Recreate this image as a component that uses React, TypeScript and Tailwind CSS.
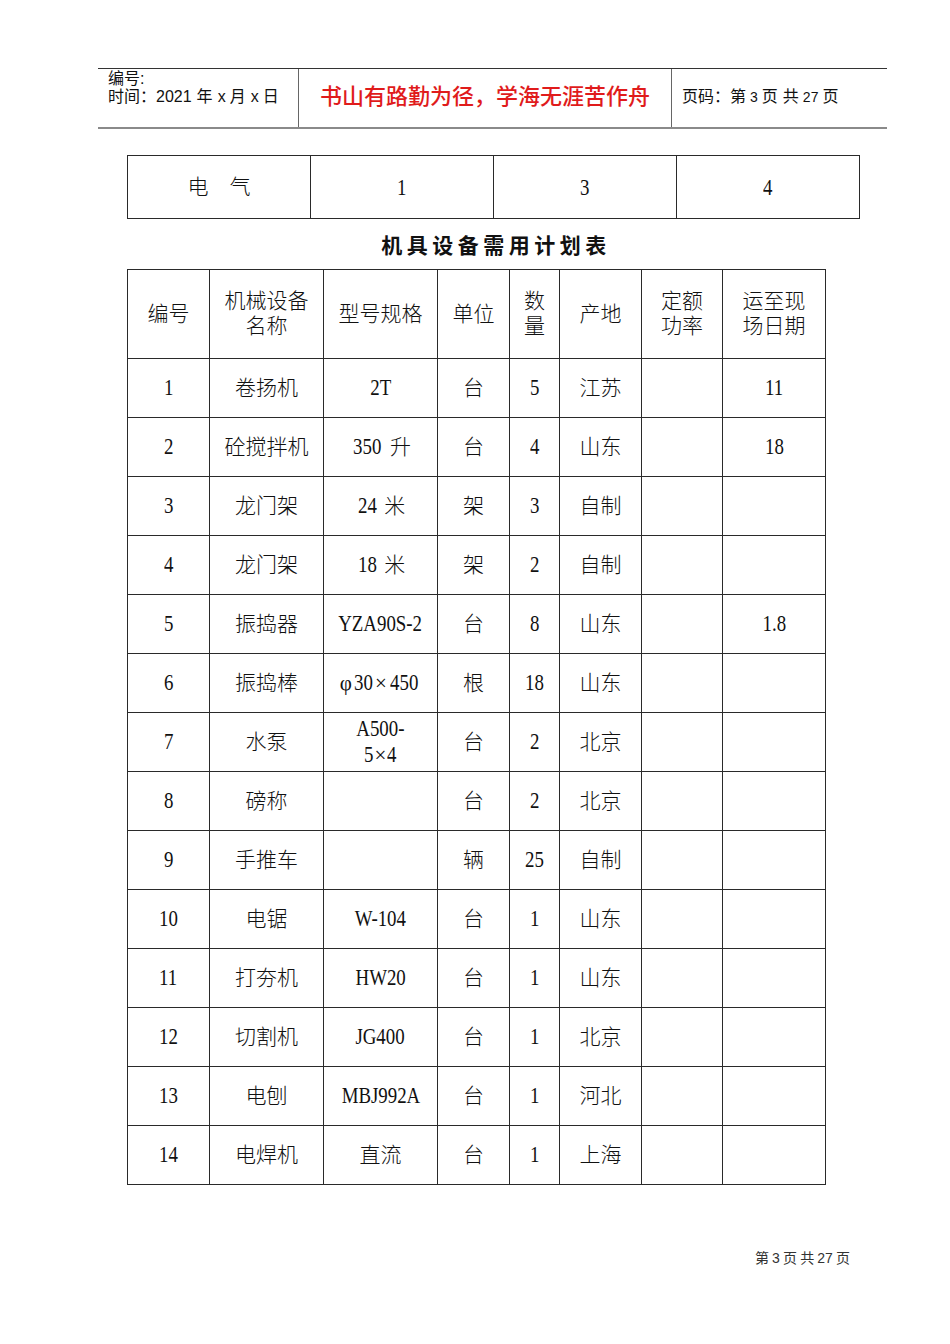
import React from "react";

const CJK = "font-['Liberation_Serif','Noto_Sans_CJK_SC',serif]";
const SANS = "font-['Liberation_Sans','Noto_Sans_CJK_SC',sans-serif]";

function L({ children }: { children: React.ReactNode }) {
  return (
    <span className="inline-block scale-x-[0.82] origin-center text-[23px] leading-[25px] font-normal font-['Liberation_Serif','Noto_Sans_CJK_SC',serif]">
      {children}
    </span>
  );
}

function renderText(t: string) {
  const parts: React.ReactNode[] = [];
  const re = /([A-Za-z0-9.\-]+)/g;
  let last = 0;
  let m: RegExpExecArray | null;
  let k = 0;
  while ((m = re.exec(t))) {
    if (m.index > last) parts.push(<span key={k++}>{t.slice(last, m.index)}</span>);
    parts.push(<L key={k++}>{m[1]}</L>);
    last = m.index + m[1].length;
  }
  if (last < t.length) parts.push(<span key={k++}>{t.slice(last)}</span>);
  return parts;
}

const rows: string[][] = [
  ["1", "卷扬机", "2T", "台", "5", "江苏", "", "11"],
  ["2", "砼搅拌机", "350 升", "台", "4", "山东", "", "18"],
  ["3", "龙门架", "24 米", "架", "3", "自制", "", ""],
  ["4", "龙门架", "18 米", "架", "2", "自制", "", ""],
  ["5", "振捣器", "YZA90S-2", "台", "8", "山东", "", "1.8"],
  ["6", "振捣棒", "φ30×450", "根", "18", "山东", "", ""],
  ["7", "水泵", "A500-\n5×4", "台", "2", "北京", "", ""],
  ["8", "磅称", "", "台", "2", "北京", "", ""],
  ["9", "手推车", "", "辆", "25", "自制", "", ""],
  ["10", "电锯", "W-104", "台", "1", "山东", "", ""],
  ["11", "打夯机", "HW20", "台", "1", "山东", "", ""],
  ["12", "切割机", "JG400", "台", "1", "北京", "", ""],
  ["13", "电刨", "MBJ992A", "台", "1", "河北", "", ""],
  ["14", "电焊机", "直流", "台", "1", "上海", "", ""],
];

const headers: string[][] = [
  ["编号"],
  ["机械设备", "名称"],
  ["型号规格"],
  ["单位"],
  ["数", "量"],
  ["产地"],
  ["定额", "功率"],
  ["运至现", "场日期"],
];

const cellBase =
  "border-r border-b border-[#2a2a2a] flex flex-col items-center justify-center text-center text-[21px] leading-[25px] font-light text-[#111]";

export default function App() {
  return (
    <div className={`w-[950px] h-[1344px] bg-white overflow-hidden ${CJK}`}>
      {/* Header */}
      <div className="ml-[98px] mt-[68px] w-[789px] h-[61px] flex border-t border-[#333] border-b-2 border-b-[#8a8a8a]">
        <div className={`w-[201px] border-r border-[#666] pl-[10px] pt-[1px] text-[16px] leading-[18px] text-[#111] ${SANS}`}>
          <div>编号:</div>
          <div>
            时间：2021<span className="ml-[5px]">年</span>
            <span className="ml-[5px]">x</span>
            <span className="ml-[4px]">月</span>
            <span className="ml-[5px]">x</span>
            <span className="ml-[4px]">日</span>
          </div>
        </div>
        <div className={`w-[373px] border-r border-[#666] flex items-center justify-center pb-[3px] text-[22px] font-medium text-[#e01b1b] ${SANS}`}>
          书山有路勤为径，学海无涯苦作舟
        </div>
        <div className={`flex-1 flex items-center pl-[10px] pb-[2px] text-[16px] text-[#111] ${SANS}`}>
          页码：第<span className="mx-[4px] text-[14px]">3</span>页<span className="ml-[5px]">共</span>
          <span className="mx-[4px] text-[14px]">27</span>页
        </div>
      </div>

      {/* small table */}
      <div className="ml-[127px] mt-[26px] w-[733px] h-[64px] grid grid-cols-[183px_183px_183px_183px] border-l border-t border-[#2a2a2a]">
        <div className={cellBase}>电　气</div>
        <div className={cellBase}>
          <L>1</L>
        </div>
        <div className={cellBase}>
          <L>3</L>
        </div>
        <div className={cellBase}>
          <L>4</L>
        </div>
      </div>

      {/* title */}
      <div className="ml-[127px] w-[733px] mt-[12px] pl-[5px] text-center text-[21px] leading-[26px] font-bold tracking-[4.5px] text-[#111] font-['Noto_Sans_CJK_SC',sans-serif]">
        机具设备需用计划表
      </div>

      {/* main table */}
      <div className="ml-[127px] mt-[12px] w-[699px] grid grid-cols-[82px_114px_114px_72px_50px_82px_81px_103px] border-l border-t border-[#2a2a2a]">
        {headers.map((h, i) => (
          <div key={`h${i}`} className={`${cellBase} h-[89px]`}>
            {h.map((line, j) => (
              <div key={j}>{line}</div>
            ))}
          </div>
        ))}
        {rows.map((r, ri) =>
          r.map((c, ci) => (
            <div key={`${ri}-${ci}`} className={`${cellBase} h-[59px]`}>
              {c.split("\n").map((line, j) => (
                <div key={j} className="leading-[25px]">
                  {renderText(line)}
                </div>
              ))}
            </div>
          ))
        )}
      </div>

      {/* footer */}
      <div className="w-[850px] mt-[63px] text-right text-[14px] leading-[18px] text-[#333] font-['Noto_Sans_CJK_SC',sans-serif]">
        第 <span className="font-['Liberation_Sans',sans-serif]">3</span> 页 共{" "}
        <span className="font-['Liberation_Sans',sans-serif]">27</span> 页
      </div>
    </div>
  );
}
